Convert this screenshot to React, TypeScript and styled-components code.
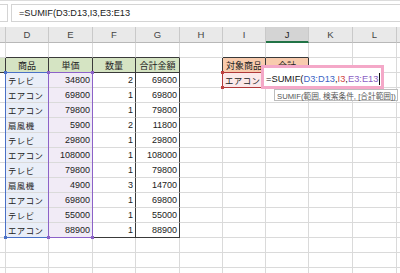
import React from 'react'
import styled, { createGlobalStyle } from 'styled-components'

const GlobalStyle = createGlobalStyle`
  body {
    margin: 0;
    background: #ffffff;
    font-family: "Liberation Sans", "Noto Sans CJK JP", sans-serif;
  }
`

const DARK = '#3a3a3a'
const GRID = '#dadada'
const COLS = '6px 43px 44px 43px 44px 43px 43px 43px 44px 44px 1fr'
const ROWS = '16px repeat(16, 15px)'

const Page = styled.div`
  width: 400px;
  height: 273px;
  overflow: hidden;
  background: #fff;
`

const FormulaBar = styled.div`
  display: flex;
  align-items: stretch;
  height: 27px;
  box-sizing: border-box;
  padding: 3px 0 5px 0;
  background: #fff;
  border-top: 1px solid #dcdcdc;
`

const NameBox = styled.div`
  width: 7px;
  border: 1px solid #d4d4d4;
  border-left: none;
  background: #fff;
`

const FormulaInput = styled.div`
  flex: 1;
  margin-left: 3px;
  border: 1px solid #d4d4d4;
  border-right: none;
  display: flex;
  align-items: center;
  padding-left: 7px;
  font-size: 9.2px;
  color: #222;
`

const SheetWrap = styled.div`
  position: relative;
`

const Sheet = styled.div`
  display: grid;
  grid-template-columns: ${COLS};
  grid-template-rows: ${ROWS};
`

const Overlay = styled.div`
  position: absolute;
  inset: 0;
  display: grid;
  grid-template-columns: ${COLS};
  grid-template-rows: ${ROWS};
  pointer-events: none;
`

const ColHead = styled.div<{ $sel?: boolean }>`
  box-sizing: border-box;
  background: ${(p) => (p.$sel ? '#d4d4d4' : '#e9e9e9')};
  border-right: 1px solid #c9c9c9;
  border-bottom: ${(p) => (p.$sel ? '2px solid #217346' : '1px solid #b8b8b8')};
  display: flex;
  align-items: center;
  justify-content: center;
  font-size: 9.5px;
  color: ${(p) => (p.$sel ? '#222' : '#444')};
`

const Cell = styled.div<{
  $bg?: string
  $r?: string
  $b?: string
  $align?: 'left' | 'right' | 'center'
  $kana?: boolean
}>`
  box-sizing: border-box;
  background: ${(p) => p.$bg || '#fff'};
  border-right: 1px solid ${(p) => p.$r || GRID};
  border-bottom: 1px solid ${(p) => p.$b || GRID};
  display: flex;
  align-items: center;
  justify-content: ${(p) =>
    p.$align === 'right' ? 'flex-end' : p.$align === 'center' ? 'center' : 'flex-start'};
  padding: 0 2px;
  font-size: ${(p) => (p.$kana ? '8.4px' : '9px')};
  color: #222;
  white-space: nowrap;
  overflow: hidden;
  letter-spacing: ${(p) => (p.$kana ? '0.5px' : '0')};
`

const Range = styled.div<{ $col: number; $row: string; $color: string }>`
  grid-column: ${(p) => p.$col} / ${(p) => p.$col + 1};
  grid-row: ${(p) => p.$row};
  margin: -1px 0 0 -1px;
  border: 1px solid ${(p) => p.$color};
  position: relative;
`

const Handle = styled.span<{ $color: string; $pos: 'tl' | 'tr' | 'bl' | 'br' }>`
  position: absolute;
  width: 3px;
  height: 3px;
  background: ${(p) => p.$color};
  ${(p) => (p.$pos[0] === 't' ? 'top: -2px;' : 'bottom: -2px;')}
  ${(p) => (p.$pos[1] === 'l' ? 'left: -2px;' : 'right: -2px;')}
`

const EditBox = styled.div`
  grid-column: 8 / 9;
  grid-row: 4 / 5;
  justify-self: start;
  align-self: start;
  width: 123px;
  height: 24px;
  margin: -8px 0 0 -5px;
  box-sizing: border-box;
  border: 3px solid #f4a8c8;
  background: #fff;
  position: relative;
  display: flex;
  align-items: center;
  padding: 3px 0 0 2px;
  font-size: 9.3px;
  color: #111;
  white-space: nowrap;
`

const Ref = styled.span<{ $color: string }>`
  color: ${(p) => p.$color};
`

const Caret = styled.span`
  display: inline-block;
  width: 1px;
  height: 12px;
  background: #111;
  margin-left: 1px;
`

const Tip = styled.div`
  position: absolute;
  top: 21px;
  left: 10px;
  height: 12px;
  box-sizing: border-box;
  padding: 0 1px 0 2px;
  border: 1px solid #bdbdbd;
  background: #fff;
  font-size: 7.7px;
  color: #555;
  display: flex;
  align-items: center;
  white-space: nowrap;
`

const data: [string, number, number, number][] = [
  ['テレビ', 34800, 2, 69600],
  ['エアコン', 69800, 1, 69800],
  ['エアコン', 79800, 1, 79800],
  ['扇風機', 5900, 2, 11800],
  ['テレビ', 29800, 1, 29800],
  ['エアコン', 108000, 1, 108000],
  ['テレビ', 79800, 1, 79800],
  ['扇風機', 4900, 3, 14700],
  ['エアコン', 69800, 1, 69800],
  ['テレビ', 55000, 1, 55000],
  ['エアコン', 88900, 1, 88900],
]

const letters = ['', 'D', 'E', 'F', 'G', 'H', 'I', 'J', 'K', 'L', '']
const GREEN = '#d5e4c3'
const ORANGE = '#f8cbad'

function Corners({ color }: { color: string }) {
  return (
    <>
      <Handle $color={color} $pos="tl" />
      <Handle $color={color} $pos="tr" />
      <Handle $color={color} $pos="bl" />
      <Handle $color={color} $pos="br" />
    </>
  )
}

export default function App() {
  const rows: React.ReactNode[] = []

  // sheet row 1 (empty, top edge of tables)
  rows.push(
    <React.Fragment key="r1">
      <Cell />
      {[0, 1, 2, 3].map((i) => (
        <Cell key={i} $b={DARK} />
      ))}
      <Cell />
      <Cell $b={DARK} />
      <Cell $b={DARK} />
      <Cell />
      <Cell />
      <Cell />
    </React.Fragment>
  )

  // sheet row 2 (headers)
  rows.push(
    <React.Fragment key="r2">
      <Cell $bg={GREEN} $r={DARK} $b={DARK} />
      {['商品', '単価', '数量', '合計金額'].map((t) => (
        <Cell key={t} $bg={GREEN} $r={DARK} $b={DARK} $align="center">
          {t}
        </Cell>
      ))}
      <Cell $r={DARK} />
      <Cell $bg={ORANGE} $r={DARK} $b={DARK} $align="center">
        対象商品
      </Cell>
      <Cell $bg={ORANGE} $r={DARK} $b={DARK} $align="center">
        合計
      </Cell>
      <Cell />
      <Cell />
      <Cell />
    </React.Fragment>
  )

  data.forEach(([name, price, qty, total], i) => {
    const last = i === data.length - 1
    const b = last ? DARK : undefined
    rows.push(
      <React.Fragment key={'d' + i}>
        <Cell $r={DARK} />
        <Cell $bg="#e9eef8" $r={DARK} $b={b} $kana>
          {name}
        </Cell>
        <Cell $bg="#f1ebf6" $r={DARK} $b={b} $align="right">
          {price}
        </Cell>
        <Cell $r={DARK} $b={b} $align="right">
          {qty}
        </Cell>
        <Cell $r={DARK} $b={b} $align="right">
          {total}
        </Cell>
        <Cell $r={i === 0 ? DARK : undefined} />
        {i === 0 ? (
          <Cell $bg="#fbe9e9" $r={DARK} $b={DARK} $kana>
            エアコン
          </Cell>
        ) : (
          <Cell />
        )}
        <Cell $r={i === 0 ? DARK : undefined} $b={i === 0 ? DARK : undefined} />
        <Cell />
        <Cell />
        <Cell />
      </React.Fragment>
    )
  })

  for (let r = 0; r < 3; r++) {
    rows.push(
      <React.Fragment key={'e' + r}>
        {letters.map((_, c) => (
          <Cell key={c} />
        ))}
      </React.Fragment>
    )
  }

  return (
    <Page>
      <GlobalStyle />
      <FormulaBar>
        <NameBox />
        <FormulaInput>=SUMIF(D3:D13,I3,E3:E13</FormulaInput>
      </FormulaBar>
      <SheetWrap>
        <Sheet>
          {letters.map((l, i) => (
            <ColHead key={i} $sel={l === 'J'}>
              {l}
            </ColHead>
          ))}
          {rows}
        </Sheet>
        <Overlay>
          <Range $col={2} $row="4 / 15" $color="#4a70c6">
            <Corners color="#4a70c6" />
          </Range>
          <Range $col={3} $row="4 / 15" $color="#8c62c8">
            <Corners color="#8c62c8" />
          </Range>
          <Range $col={7} $row="4 / 5" $color="#b03a3a">
            <Corners color="#c0403f" />
          </Range>
          <EditBox>
            =SUMIF(<Ref $color="#3b64c4">D3:D13</Ref>,<Ref $color="#d0443f">I3</Ref>,
            <Ref $color="#8a5ec4">E3:E13</Ref>
            <Caret />
            <Tip>SUMIF(範囲, 検索条件, [合計範囲])</Tip>
          </EditBox>
        </Overlay>
      </SheetWrap>
    </Page>
  )
}
